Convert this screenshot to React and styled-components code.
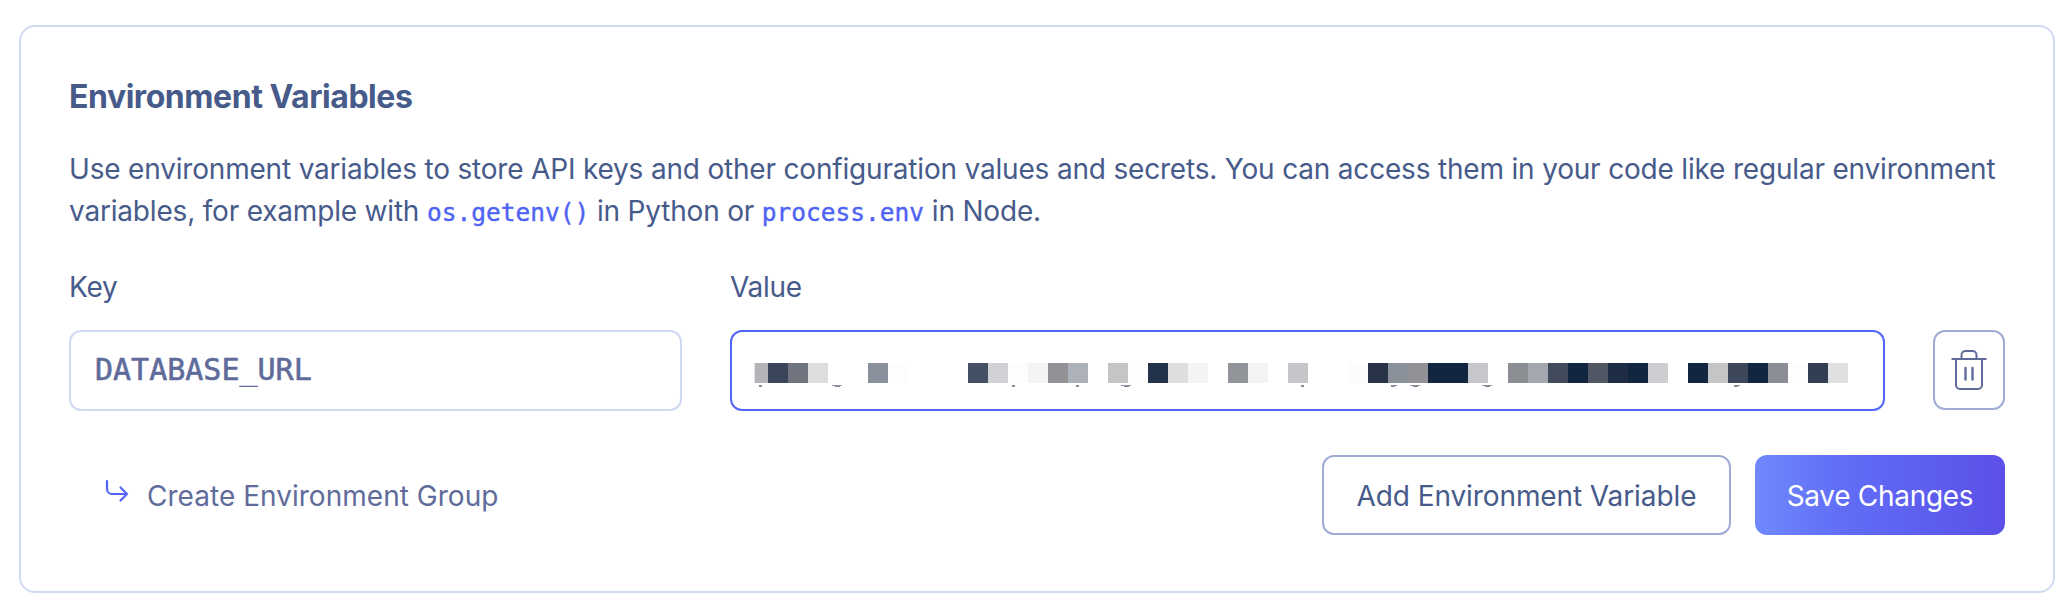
import React from 'react';
import styled, { createGlobalStyle } from 'styled-components';

const GlobalStyle = createGlobalStyle`
  *, *::before, *::after { box-sizing: border-box; }
  body { margin: 0; background: #fff; font-family: Inter, "Liberation Sans", sans-serif; font-weight: 430; color: #475b8b; }
  button, input { font-family: inherit; font-weight: inherit; }
`;

const Page = styled.main`
  height: 614px;
  padding: 25px 17px 21px 19px;
`;

const Card = styled.section`
  height: 568px;
  padding: 48px;
  border: 2px solid #cfdaf1;
  border-radius: 16px;
`;

const Title = styled.h2`
  margin: 0;
  height: 48px;
  font-size: 32px;
  line-height: 44px;
  font-weight: 650;
  letter-spacing: -0.45px;
  white-space: nowrap;
`;

const Description = styled.p`
  margin: 25px 0 0;
  font-size: 28px;
  line-height: 42px;
  letter-spacing: -0.187px;
  white-space: nowrap;
`;

const Code = styled.code`
  font-family: "DejaVu Sans Mono", monospace;
  font-size: 24.5px;
  line-height: 1;
  letter-spacing: 0;
  color: #4f63f4;
  -webkit-text-stroke: 0.4px currentColor;
`;

const Fields = styled.div`
  display: grid;
  grid-template-columns: 613px 1155px 72px;
  column-gap: 48px;
  align-items: end;
  margin-top: 34px;
`;

const Field = styled.div`
  display: flex;
  flex-direction: column;
  gap: 22px;
  font-size: 28px;
  line-height: 42px;
`;

const FieldName = styled.span`
  letter-spacing: -0.3px;
`;

const KeyInput = styled.input`
  height: 81px;
  padding: 0 24px 3px;
  border: 2px solid #cfdaf1;
  border-radius: 12px;
  background: #fff;
  outline: none;
  font-family: "DejaVu Sans Mono", monospace;
  font-size: 30px;
  color: #5f6c9b;
  -webkit-text-stroke: 0.6px currentColor;
`;

const ValueBox = styled.div`
  height: 81px;
  padding: 21px 22px 0;
  border: 2px solid #5165f6;
  border-radius: 12px;
`;

const Mosaic = styled.div`
  display: flex;
  height: 30px;
  align-items: flex-end;
`;

const Cell = styled.span`
  flex: none;
  width: ${(p) => p.$width || 20}px;
  height: 20px;
  background: ${(p) => p.$tone || 'transparent'};
`;

const Tails = styled.svg`
  display: block;
  margin-top: 2px;
`;

const IconButton = styled.button`
  display: flex;
  align-items: center;
  justify-content: center;
  width: 72px;
  height: 80px;
  margin-bottom: 1px;
  padding: 0;
  border: 2px solid #a0acd6;
  border-radius: 12px;
  background: #fff;
`;

const Footer = styled.div`
  display: flex;
  align-items: center;
  gap: 24px;
  margin-top: 44px;
`;

const GroupLink = styled.a`
  display: flex;
  align-items: center;
  gap: 18px;
  margin-right: auto;
  padding: 2px 0 0 36px;
  font-size: 28px;
  letter-spacing: 0.03px;
  color: #5f6c9b;
  white-space: nowrap;
`;

const ArrowIcon = styled.svg`
  flex: none;
  margin-bottom: 6px;
`;

const Button = styled.button`
  width: ${(p) => p.$width}px;
  height: 80px;
  padding: 2px 0 0;
  border: ${(p) => (p.$primary ? '0' : '2px solid #a0acd6')};
  border-radius: 12px;
  background: ${(p) => (p.$primary ? 'linear-gradient(90deg, #7089fd 0%, #606df6 36%, #5b50e8 100%)' : '#fff')};
  color: ${(p) => (p.$primary ? '#fff' : '#475b8b')};
  font-size: 28px;
  letter-spacing: ${(p) => (p.$primary ? '-0.3px' : '-0.1px')};
  white-space: nowrap;
`;

const N = '#12263f';
const tones = [
  '#3a4559', '#6f747f', '#dddddf', null, null, '#8a909b', '#fdfdfd', null, null, null,
  '#445164', '#d1d2d6', '#fdfdfd', '#f3f4f6', '#929296', '#adb1b9', null, '#c4c5c7', '#fefefe', '#22324a',
  '#dddee0', '#f4f4f4', null, '#919498', '#f3f3f3', null, '#c5c6ca', null, null, '#fcfcfc',
  '#283347', '#8a909a', '#929296', N, N, '#c6c7cb', null, '#8b8e92', '#a4a7b0', '#424b5c',
  N, '#505663', '#1e2d45', N, '#cccdd1', null, N, '#c4c5c7', '#3d475a', N,
  '#8b8e96', '#fdfdfd', '#323e52', '#dfe0e2',
];

const stems = [5, 258, 322, 547];
const bowls = [78, 367, 656, 728];
const hooks = [637, 980];

export default function App() {
  return (
    <>
      <GlobalStyle />
      <Page>
        <Card>
          <Title>Environment Variables</Title>
          <Description>
            Use environment variables to store API keys and other configuration values and secrets. You can access them in your code like regular environment
            <br />
            variables, for example with <Code>os.getenv()</Code> in Python or <Code>process.env</Code> in Node.
          </Description>
          <Fields>
            <Field as="label">
              <FieldName>Key</FieldName>
              <KeyInput defaultValue="DATABASE_URL" spellCheck={false} />
            </Field>
            <Field>
              <FieldName>Value</FieldName>
              <ValueBox>
                <Mosaic>
                  <Cell $width={1} $tone="#e4e5e7" />
                  <Cell $width={13} $tone="#b3b4b8" />
                  {tones.map((tone, i) => <Cell key={i} $tone={tone} />)}
                </Mosaic>
                <Tails width="1094" height="2" shapeRendering="crispEdges">
                  {stems.map((x) => <rect key={x} x={x} width="3" height="2" fill="#8790a0" />)}
                  {bowls.map((x) => (
                    <g key={x} fill="#78818f">
                      <rect x={x} width="10" height="1" opacity=".8" />
                      <rect x={x + 3} y="1" width="5" height="1" />
                    </g>
                  ))}
                  {hooks.map((x) => (
                    <g key={x} fill="#8790a0">
                      <rect x={x} width="6" height="1" />
                      <rect x={x} y="1" width="4" height="1" />
                    </g>
                  ))}
                </Tails>
              </ValueBox>
            </Field>
            <IconButton aria-label="Delete">
              <svg width="36" height="40" viewBox="0 0 36 40" fill="none" stroke="#5f6c9b" strokeWidth="2">
                <path d="M.5 9h35M5 9v26a4 4 0 0 0 4 4h18a4 4 0 0 0 4-4V9M10.500 9V5a4 4 0 0 1 4-4h7a4 4 0 0 1 4 4v4" />
                <path d="M14.500 18v11.500M21.500 18v11.500" strokeWidth="2.400" strokeLinecap="round" />
              </svg>
            </IconButton>
          </Fields>
          <Footer>
            <GroupLink>
              <ArrowIcon width="24" height="28" viewBox="0 0 24 28" fill="none" stroke="#5165f6" strokeWidth="2.200" strokeLinecap="round" strokeLinejoin="round">
                <path d="M2 2v8a5 5 0 0 0 5 5h15M15.500 8.500l6.500 6.500-6.500 6.500" />
              </ArrowIcon>
              <span>Create Environment Group</span>
            </GroupLink>
            <Button $width={409}>Add Environment Variable</Button>
            <Button $width={250} $primary>Save Changes</Button>
          </Footer>
        </Card>
      </Page>
    </>
  );
}
